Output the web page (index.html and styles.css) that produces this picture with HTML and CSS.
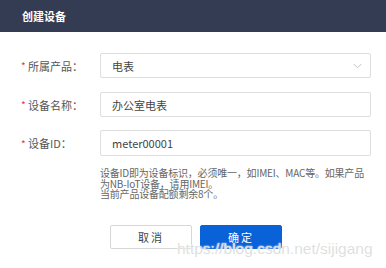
FILE: index.html
```html
<!DOCTYPE html>
<html lang="zh">
<head>
<meta charset="utf-8">
<link rel="stylesheet" href="styles.css">
</head>
<body>
<div class="dialog">
  <div class="header">创建设备</div>
  <div class="form">
    <div class="row">
      <label class="label"><span class="star">*</span>所属产品：</label>
      <div class="control select">
        <span>电表</span>
        <svg class="arrow" width="9" height="6" viewBox="0 0 9 6"><path d="M0.5 0.8 L4.5 4.8 L8.5 0.8" fill="none" stroke="#c4c4c4" stroke-width="1"/></svg>
      </div>
    </div>
    <div class="row">
      <label class="label"><span class="star">*</span>设备名称：</label>
      <div class="control">办公室电表</div>
    </div>
    <div class="row">
      <label class="label"><span class="star">*</span>设备ID：</label>
      <div class="control">meter00001</div>
    </div>
    <div class="help">设备ID即为设备标识，必须唯一，如IMEI、MAC等。如果产品<br>为NB-IoT设备，请用IMEI。<br>当前产品设备配额剩余8个。</div>
    <div class="actions">
      <button class="btn">取消</button>
      <button class="btn primary">确定</button>
    </div>
  </div>
  <div class="watermark">https://blog.csdn.net/sijigang</div>
</div>
</body>
</html>
```

FILE: styles.css
```css
* { box-sizing: border-box; }
html, body { margin: 0; padding: 0; background: #fff; }
body {
  font-family: "Noto Sans CJK SC", "Noto Sans", sans-serif;
  width: 386px;
  height: 268px;
  overflow: hidden;
}
.dialog { position: relative; width: 386px; height: 268px; }
.header {
  height: 32px;
  background: #333c53;
  color: #fff;
  font-size: 11px;
  font-weight: bold;
  line-height: 32px;
  padding-left: 22px;
}
.form { padding: 21px 15px 0 21px; }
.row { display: flex; align-items: center; margin-bottom: 13px; }
.row:first-child { margin-bottom: 14px; }
.row:nth-child(3) { margin-bottom: 12px; }
.label {
  width: 79px;
  font-size: 11px;
  color: #555;
  display: flex;
  align-items: center;
}
.star { color: #e4393c; width: 7px; font-size: 10px; }
.control {
  flex: 1;
  height: 25px;
  border: 1px solid #dedede;
  border-radius: 2px;
  padding-left: 11px;
  font-size: 11px;
  color: #444;
  display: flex;
  align-items: center;
}
.row:nth-child(3) .control { height: 26px; }
.select { justify-content: space-between; padding-right: 8px; }
.arrow { display: block; }
.help {
  margin-left: 79px;
  font-size: 10px;
  letter-spacing: -0.2px;
  line-height: 10.5px;
  color: #666;
  white-space: nowrap;
}
.actions {
  display: flex;
  justify-content: center;
  gap: 8px;
  margin-top: 25px;
}
.btn {
  width: 82px;
  height: 24px;
  border: 1px solid #d6d6d6;
  border-radius: 2px;
  background: #fff;
  color: #444;
  font-family: inherit;
  font-size: 11px;
  letter-spacing: 2px;
  padding: 0;
}
.btn.primary {
  background: #0a62d9;
  border-color: #0a62d9;
  color: #fff;
}
.watermark {
  position: absolute;
  left: 177px;
  top: 240px;
  font-family: "Liberation Sans", Arial, sans-serif;
  font-size: 15.5px;
  color: rgba(215, 215, 215, 0.8);
  text-shadow: 0 0 1px #fff, 0 0 2px #fff;
  pointer-events: none;
}
```
